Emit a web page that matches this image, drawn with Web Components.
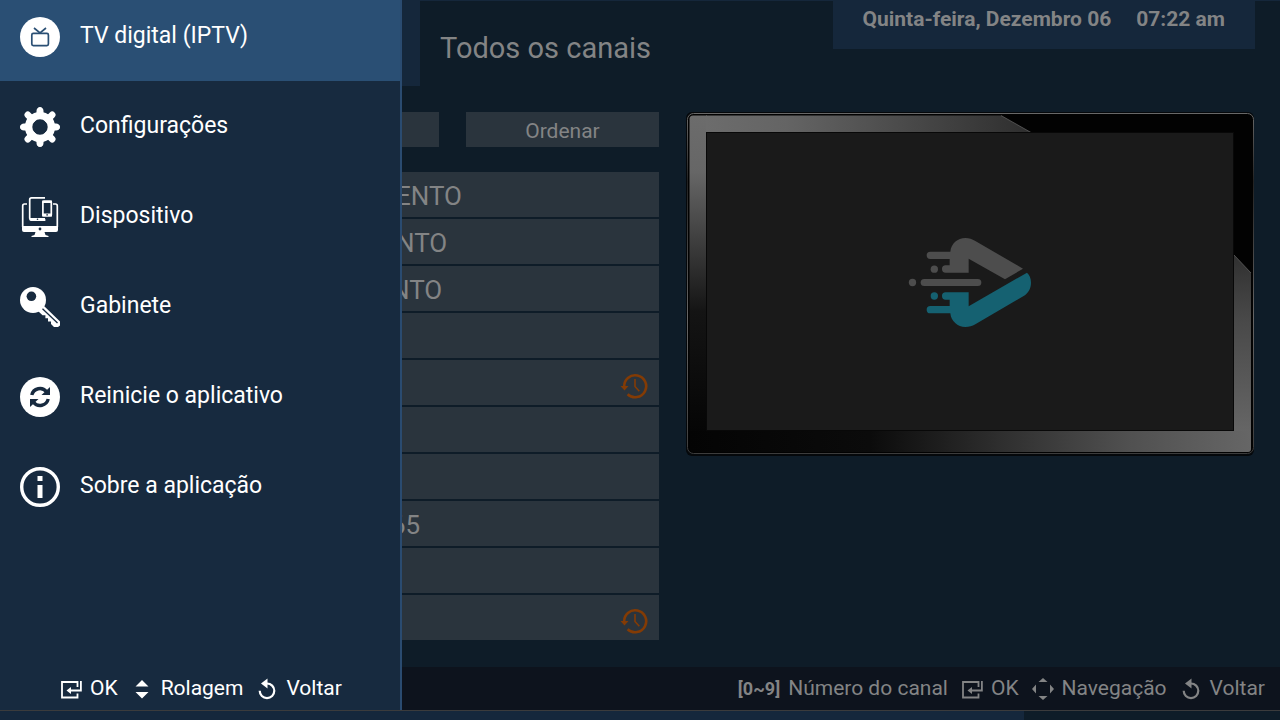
<!DOCTYPE html>
<html lang="pt">
<head>
<meta charset="utf-8">
<title>TV digital (IPTV)</title>
<style>
  body { margin: 0; background: #0e1c28; font-family: Roboto, "Liberation Sans", sans-serif; }
</style>
</head>
<body>
<tv-app></tv-app>

<script>
const define = (name, html, setup) => {
  const template = document.createElement('template');
  template.innerHTML = html;
  customElements.define(name, class extends HTMLElement {
    constructor() {
      super();
      this.attachShadow({ mode: 'open' }).append(template.content.cloneNode(true));
    }
    connectedCallback() { if (setup) setup(this, this.shadowRoot); }
  });
};

const icons = {
  tv: ['0 0 40 40', `<circle cx="20" cy="20" r="20" fill="currentColor"/>
    <g fill="none" stroke="var(--icon-hole)" stroke-width="1.7"><rect x="11.8" y="16.4" width="16.6" height="12.2" rx="1.5"/><path d="M14 11l6 4.8 6-4.8"/></g>`],
  gear: ['0 0 40 40', `<g fill="none" stroke="currentColor"><circle cx="20" cy="20" r="11.4" stroke-width="7.400"/>
    <g stroke-linecap="round"><path d="M20 2.500V8M20 32v5.500M2.500 20H8M32 20h5.500" stroke-width="5"/><path d="M20 4V8M20 32v4M4 20H8M32 20h4" stroke-width="7"/><path d="M7.800 7.800l4.500 4.500M27.700 27.700l4.500 4.500M32.200 7.800l-4.500 4.500M12.300 27.700l-4.500 4.500" stroke-width="6.600"/></g></g>`],
  device: ['0 0 40 40', `<g fill="none" stroke="currentColor" stroke-width="1.700">
      <path d="M7 7H4.500Q2.700 7 2.700 9v21M33 7h2.500Q37.300 7 37.300 9v21"/>
      <path d="M25 .900H11.500Q9.700.900 9.700 2.700V21.500M19 23h6.500"/>
      <rect x="22.900" y="4.300" width="8.400" height="14.400" rx="1"/></g>
    <path fill="currentColor" d="M9 21h16v3H11q-2 0-2-3zM22.200 3.600h9.800v2.400h-9.800zM22.200 16.500h9.800v3h-9.800zM2 29h36v4q0 2-2 2H4q-2 0-2-2zM15.500 35h9l1 3 3 1v1h-17v-1l3-1z"/>
    <g fill="var(--icon-hole)"><circle cx="20" cy="32" r="1.400"/><circle cx="17.500" cy="22.300" r=".8"/><circle cx="27.100" cy="17.900" r=".8"/></g>`],
  key: ['0 0 40 40', `<circle cx="13" cy="13" r="13" fill="currentColor"/><path fill="currentColor" d="M24 19L40 34.500V38.500L38 40h-4L31 37v-2.500h-3V31.200h-2.600v-2.900H22.500L18 24z"/>
    <circle cx="11.400" cy="9.300" r="4.800" fill="var(--icon-hole)"/><path d="M22.500 21.700L37.500 36" stroke="var(--icon-hole)" stroke-width="1.300"/>`],
  reload: ['0 0 40 40', `<circle cx="20" cy="20" r="20" fill="currentColor"/>
    <g fill="none" stroke="var(--icon-hole)" stroke-width="3.400"><path d="M11.800 18A8.300 8.300 0 0 1 26.500 14.800M28.200 22A8.300 8.300 0 0 1 13.500 25.200"/></g>
    <path fill="var(--icon-hole)" d="M30 10v8h-8.500zM10 30v-8h8.500z"/>`],
  info: ['0 0 40 40', `<circle cx="20" cy="20" r="18.300" fill="none" stroke="currentColor" stroke-width="3.400"/>
    <path fill="currentColor" d="M17.500 9h5v5h-5zM17.500 18h5v13h-5z"/>`],
  enter: ['0 0 22 22', `<g fill="none" stroke="currentColor" stroke-width="1.800"><path d="M17.500 9V4H2v15.500h15.500V15.500M20.900 3v9.500H9"/></g>
    <path fill="currentColor" d="M6.500 12.500l4.500-3.500v7z"/>`],
  scroll: ['0 0 22 22', `<path fill="currentColor" d="M11 2l6.500 6.500h-13zM11 20.500l6.500-6.500h-13z"/>`],
  move: ['0 0 22 22', `<path fill="currentColor" d="M11 0l4.500 4h-9zM11 22l4.500-4h-9zM0 11l4-4.500v9zM22 11l-4-4.500v9z"/>`],
  back: ['0 0 22 22', `<path d="M10 5.500h1a7.300 7.300 0 1 1-7.300 7.300" fill="none" stroke="currentColor" stroke-width="2.200"/>
    <path fill="currentColor" d="M5 5.500l6.500-5v10z"/>`],
  history: ['0 0 28 26', `<g fill="none" stroke="currentColor" stroke-width="2.600"><path d="M4.200 14A11 11 0 1 1 7.600 21.200"/><path d="M15 6v7.500l4.300 4.700" stroke-width="1.600"/></g>
    <path fill="currentColor" d="M.5 13h8l-4 4.500z"/>`]
};

define('tv-icon', `<style>
  :host { display: block; flex: none; width: 22px; height: 22px; --icon-hole: #172a3f; }
  :host([large]) { width: 40px; height: 40px; }
  :host([name="tv"]) { --icon-hole: #2a4f74; }
  :host([name="history"]) { width: 28px; height: 26px; color: #833b05; }
  svg { display: block; width: 100%; height: 100%; }
</style><svg aria-hidden="true"></svg>`, (host, root) => {
  const [box, body] = icons[host.getAttribute('name')];
  const svg = root.querySelector('svg');
  svg.setAttribute('viewBox', box);
  svg.innerHTML = body;
});

define('menu-item', `<style>
  :host { display: block; color: #fff; }
  :host([active]) { background: #2a4f74; }
  a { box-sizing: border-box; height: 90px; padding: 2px 20px 0; display: flex; align-items: center; gap: 20px; color: inherit; text-decoration: none; font-size: 23px; line-height: 28px; }
  span { padding-bottom: 2px; }
</style><a href="#"><slot name="icon"></slot><span><slot></slot></span></a>`);

define('key-hint', `<style>
  :host { display: flex; align-items: center; gap: 8px; font-size: 21px; line-height: 24px; white-space: nowrap; }
  span { padding-bottom: 2px; }
  ::slotted(b) { font-size: 18px; }
</style><slot name="icon"></slot><span><slot></slot></span>`);

define('side-drawer', `<style>
  :host { display: flex; flex-direction: column; box-sizing: border-box; width: 402px; overflow: hidden; background: #172a3f; border-right: 2px solid #2a4b70; color: #fff; }
  nav { margin-top: -9px; flex: 1; }
  footer { height: 43px; padding-left: 60px; display: flex; align-items: center; gap: 13px; }
</style>
<nav aria-label="Menu">
  <menu-item active><tv-icon slot="icon" name="tv" large></tv-icon>TV digital (IPTV)</menu-item>
  <menu-item><tv-icon slot="icon" name="gear" large></tv-icon>Configurações</menu-item>
  <menu-item><tv-icon slot="icon" name="device" large></tv-icon>Dispositivo</menu-item>
  <menu-item><tv-icon slot="icon" name="key" large></tv-icon>Gabinete</menu-item>
  <menu-item><tv-icon slot="icon" name="reload" large></tv-icon>Reinicie o aplicativo</menu-item>
  <menu-item><tv-icon slot="icon" name="info" large></tv-icon>Sobre a aplicação</menu-item>
</nav>
<footer>
  <key-hint><tv-icon slot="icon" name="enter"></tv-icon>OK</key-hint>
  <key-hint><tv-icon slot="icon" name="scroll"></tv-icon>Rolagem</key-hint>
  <key-hint><tv-icon slot="icon" name="back"></tv-icon>Voltar</key-hint>
</footer>`);

define('page-header', `<style>
  :host { display: flex; height: 86px; box-sizing: border-box; border-top: 1px solid #15273b; padding-right: 25px; align-items: flex-start; }
  .tab { width: 420px; align-self: stretch; background: #15273b; flex: none; }
  h1 { margin: 0; padding: 29px 20px 0; flex: 1; font-size: 29px; line-height: 36px; font-weight: 400; white-space: nowrap; }
  .clock { box-sizing: border-box; height: 48px; padding: 6px 30px 0; display: flex; gap: 25px; background: #15273b; font-size: 21px; line-height: 24px; font-weight: 700; white-space: nowrap; }
</style>
<div class="tab"></div>
<h1>Todos os canais</h1>
<div class="clock"><span>Quinta-feira, Dezembro 06</span><time>07:22 am</time></div>`);

define('channel-row', `<style>
  :host { box-sizing: border-box; height: 45px; padding: 3px 10px 0 370px; display: flex; align-items: center; justify-content: space-between; background: #2a343d; font-size: 26px; line-height: 30px; }
  :host([wide]) { padding-left: 365px; }
  ::slotted(tv-icon) { margin: 4px 1px 0 0; }
</style><span><slot></slot></span><slot name="icon"></slot>`);

define('channel-list', `<style>
  :host { display: block; }
  .tools { display: grid; grid-template-columns: repeat(3, 1fr); gap: 27px; margin-bottom: 25px; }
  button { height: 35px; border: 0; padding: 2px 0 0; background: #2a343d; color: inherit; font: 21px/24px Roboto, "Liberation Sans", sans-serif; }
  .rows { display: grid; gap: 2px; }
</style>
<div class="tools"><button aria-label="Grupos"></button><button aria-label="Buscar"></button><button>Ordenar</button></div>
<div class="rows">
  <channel-row>ENTO</channel-row>
  <channel-row>NTO</channel-row>
  <channel-row wide>NTO</channel-row>
  <channel-row></channel-row>
  <channel-row><tv-icon slot="icon" name="history"></tv-icon></channel-row>
  <channel-row></channel-row>
  <channel-row></channel-row>
  <channel-row wide>65</channel-row>
  <channel-row></channel-row>
  <channel-row><tv-icon slot="icon" name="history"></tv-icon></channel-row>
</div>`);

define('tv-preview', `<style>
  :host { display: block; }
  svg { display: block; width: 100%; height: auto; }
</style>
<svg viewBox="0 0 568 344" role="img" aria-label="Prévia do canal">
  <defs>
    <linearGradient id="rim" x1="0" y1="0" x2="0" y2="1"><stop offset="0" stop-color="#686868"/><stop offset=".2" stop-color="#222"/><stop offset=".6" stop-color="#666"/><stop offset="1" stop-color="#3c3c3c"/></linearGradient>
    <linearGradient id="top" x1="0" y1="0" x2="1" y2="0"><stop offset="0" stop-color="#6c6c6c"/><stop offset=".25" stop-color="#646464"/><stop offset="1" stop-color="#2e2e2e"/></linearGradient>
    <linearGradient id="left" x1="0" y1="0" x2="0" y2="1"><stop offset="0" stop-color="#6c6c6c"/><stop offset=".18" stop-color="#666"/><stop offset=".42" stop-color="#3a3a3a"/><stop offset=".62" stop-color="#141414"/><stop offset="1" stop-color="#050505"/></linearGradient>
    <linearGradient id="right" x1="0" y1="0" x2="0" y2="1"><stop offset="0" stop-color="#303030"/><stop offset=".35" stop-color="#484848"/><stop offset="1" stop-color="#666"/></linearGradient>
    <linearGradient id="bottom" x1="0" y1="0" x2="1" y2="0"><stop offset="0" stop-color="#040404"/><stop offset=".32" stop-color="#0b0b0b"/><stop offset=".55" stop-color="#2e2e2e"/><stop offset=".78" stop-color="#505050"/><stop offset="1" stop-color="#666"/></linearGradient>
  </defs>
  <rect x="0" y="0" width="568" height="344" rx="6" fill="#05080b"/>
  <rect x="1.500" y="1.500" width="566" height="340" rx="6" fill="#020202" stroke="url(#rim)"/>
  <path fill="url(#left)" d="M3.500 7Q3.500 3.500 7 3.500H21V320H3.500z"/>
  <path fill="url(#top)" d="M20 3.500H315L345 20.500H20z"/>
  <path fill="url(#right)" d="M548 143l17 18v160h-17z"/>
  <path fill="url(#bottom)" d="M4 319H565V337q0 3-3 3H7q-3 0-3-3z"/>
  <path d="M315 3.500l30 17M548 143l17 18" stroke="#666" stroke-width=".7"/>
  <rect x="20.500" y="20.500" width="527" height="298" fill="#1a1a1a" stroke="#080808"/>
  <g transform="translate(204 108) scale(.33333)">
    <g fill="#4d4d4d"><circle cx="67.500" cy="187.500" r="11"/><rect x="92" y="177" width="182" height="21" rx="10.500"/><circle cx="133" cy="147.500" r="11"/>
      <path d="M121 95H181C183 71 203 54 226 54C238 54 246 57 256 63L399 146L345 178L236 116V158H167a11 11 0 0 1 0-22H179V117H121a11 11 0 0 1 0-22z"/></g>
    <g fill="#156171"><circle cx="133" cy="228" r="11"/>
      <path d="M121 258H179V239H167a11 11 0 0 1 0-22H236V259L411 158C419 165 423 175 423 188C423 205 415 219 401 228L256 313C246 319 238 321 226 321C203 321 183 304 181 280H121a11 11 0 0 1 0-22z"/></g>
  </g>
</svg>`);

define('key-bar', `<style>
  :host { display: block; background: #0d131d; }
  .hints { height: 43px; padding-right: 15px; display: flex; align-items: center; justify-content: flex-end; gap: 13px; }
  .progress { height: 9px; border-top: 1px solid #3b3b3c; background: #0e1c28; }
  .progress div { width: 80%; height: 100%; background: #15273c; }
</style>
<div class="hints">
  <key-hint><b slot="icon">[0~9]</b>Número do canal</key-hint>
  <key-hint><tv-icon slot="icon" name="enter"></tv-icon>OK</key-hint>
  <key-hint><tv-icon slot="icon" name="move"></tv-icon>Navegação</key-hint>
  <key-hint><tv-icon slot="icon" name="back"></tv-icon>Voltar</key-hint>
</div>
<div class="progress"><div></div></div>`);

define('tv-app', `<style>
  :host { position: relative; display: flex; flex-direction: column; min-height: 100vh; color: #838485; overflow: hidden; }
  main { flex: 1; display: grid; grid-template-columns: minmax(0, 633fr) minmax(0, 568fr); gap: 27px; padding: 26px 26px 27px; align-items: start; }
  side-drawer { position: absolute; top: 0; left: 0; bottom: 10px; }
</style>
<page-header></page-header>
<main><channel-list></channel-list><tv-preview></tv-preview></main>
<key-bar></key-bar>
<side-drawer></side-drawer>`);
</script>
</body>
</html>
